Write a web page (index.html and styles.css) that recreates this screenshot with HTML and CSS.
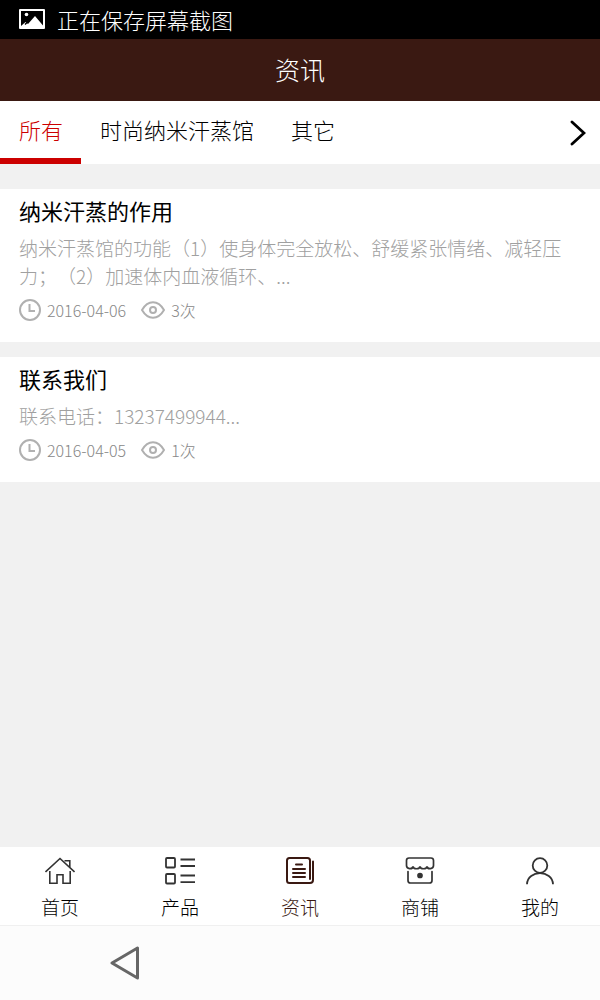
FILE: index.html
```html
<!DOCTYPE html>
<html lang="zh-CN">
<head>
<meta charset="utf-8">
<meta name="viewport" content="width=device-width, initial-scale=1">
<title>资讯</title>
<link rel="stylesheet" href="styles.css">
</head>
<body>
<div class="app">
  <div class="status">
    <svg class="status-icon" width="26" height="20" viewBox="0 0 26 20" aria-hidden="true">
      <rect width="26" height="20" rx="1" fill="#fff"/>
      <path d="M2 2h22v14.500L16 7l-7 8-2.500-2L2 17z" fill="#000"/>
      <circle cx="7.500" cy="5.500" r="1.800" fill="#fff"/>
      <path d="M6 15.500 9.500 12" stroke="#000" stroke-width="1.500"/>
    </svg>
    <span>正在保存屏幕截图</span>
  </div>
  <header class="header"><h1 class="header-title">资讯</h1></header>
  <nav class="tabs" aria-label="分类">
    <a class="tab tab-active" href="#all">所有</a>
    <a class="tab" href="#sauna">时尚纳米汗蒸馆</a>
    <a class="tab" href="#other">其它</a>
    <button class="tabs-more" type="button" aria-label="更多">
      <svg width="16" height="26" viewBox="0 0 16 26" fill="none" stroke="#000" stroke-width="2.800" stroke-linecap="round"><path d="M2 2 14 13 2 24"/></svg>
    </button>
  </nav>
  <main class="list">
    <article class="card">
      <h2 class="card-title">纳米汗蒸的作用</h2>
      <p class="card-text">纳米汗蒸馆的功能（1）使身体完全放松、舒缓紧张情绪、减轻压力；（2）加速体内血液循环、...</p>
      <div class="meta">
        <svg class="meta-clock" width="22" height="22" viewBox="0 0 22 22" fill="none" stroke="#b0b0b0" stroke-width="2" aria-hidden="true"><circle cx="11" cy="11" r="10"/><path d="M10.500 5v7H16"/></svg>
        <time datetime="2016-04-06">2016-04-06</time>
        <svg class="meta-eye" width="24" height="18" viewBox="0 0 24 18" fill="none" stroke="#b0b0b0" stroke-width="2" aria-hidden="true"><path d="M1 9C7-1.300 17-1.300 23 9 17 19.300 7 19.300 1 9z"/><circle cx="12" cy="9" r="3"/></svg>
        <span>3次</span>
      </div>
    </article>
    <article class="card">
      <h2 class="card-title">联系我们</h2>
      <p class="card-text">联系电话：13237499944...</p>
      <div class="meta">
        <svg class="meta-clock" width="22" height="22" viewBox="0 0 22 22" fill="none" stroke="#b0b0b0" stroke-width="2" aria-hidden="true"><circle cx="11" cy="11" r="10"/><path d="M10.500 5v7H16"/></svg>
        <time datetime="2016-04-05">2016-04-05</time>
        <svg class="meta-eye" width="24" height="18" viewBox="0 0 24 18" fill="none" stroke="#b0b0b0" stroke-width="2" aria-hidden="true"><path d="M1 9C7-1.300 17-1.300 23 9 17 19.300 7 19.300 1 9z"/><circle cx="12" cy="9" r="3"/></svg>
        <span>1次</span>
      </div>
    </article>
  </main>
  <nav class="bottom" aria-label="主导航">
    <a class="item" href="#home">
      <svg width="30" height="28" viewBox="0 0 30 28" fill="none" stroke="#333" stroke-width="1.600" aria-hidden="true"><path d="M.5 15 15 1.500 29.500 15"/><path d="M4.800 14v12.300h7.200v-8.500h6v8.500h7.200V14M19.500 3.800h5.300v6.500"/></svg>
      <span>首页</span>
    </a>
    <a class="item" href="#products">
      <svg width="30" height="28" viewBox="0 0 30 28" fill="none" stroke="#333" stroke-width="1.800" aria-hidden="true"><rect x="1" y="1" width="9" height="9.500" rx="1"/><rect x="1" y="17" width="9" height="9.500" rx="1"/><path d="M15.500 2.500h14.500M15.500 9h14.500M15.500 18.500h14.500M15.500 25.200h14.500"/></svg>
      <span>产品</span>
    </a>
    <a class="item item-active" href="#news" aria-current="page">
      <svg width="30" height="28" viewBox="0 0 30 28" fill="none" stroke="#3a1912" stroke-width="2" stroke-linecap="round" aria-hidden="true"><path d="M25 22V3.500Q25 1 22.500 1h-18Q2 1 2 3.500v20Q2 26 4.500 26H25q3 0 3-3V4.500"/><path d="M11 7.500h6M8 12h12M8 16h12M8 20h12"/></svg>
      <span>资讯</span>
    </a>
    <a class="item" href="#shop">
      <svg width="30" height="28" viewBox="0 0 30 28" fill="none" stroke="#333" stroke-width="1.700" stroke-linecap="round" aria-hidden="true"><path d="M4 1h22q2.500 0 2.500 2.500V8.500C28.500 12.500 22.500 12.500 22 9.500 21.500 12.500 15.500 12.500 15 9.500 14.500 12.500 8.500 12.500 8 9.500 7.500 12.500 1.500 12.500 1.500 8.500v-5Q1.500 1 4 1z"/><path d="M3 14.500V23.500Q3 26 5.500 26h19Q27 26 27 23.500v-9"/><circle cx="15" cy="18.500" r="2" fill="#333"/></svg>
      <span>商铺</span>
    </a>
    <a class="item" href="#me">
      <svg width="30" height="28" viewBox="0 0 30 28" fill="none" stroke="#333" stroke-width="1.800" aria-hidden="true"><circle cx="15" cy="8.500" r="7.300"/><path d="M2 27.200C2.500 12.500 27.500 12.500 28 27.200"/></svg>
      <span>我的</span>
    </a>
  </nav>
  <div class="system">
    <button class="back" type="button" aria-label="返回">
      <svg width="30" height="34" viewBox="0 0 30 34" fill="none" stroke="#666" stroke-width="3" stroke-linejoin="round"><path d="M27.500 2v30L2 17z"/></svg>
    </button>
  </div>
</div>
</body>
</html>
```
FILE: styles.css
```css
* {
  box-sizing: border-box;
}

body {
  margin: 0;
  background: #f1f1f1;
  color: #000;
  font-family: "Noto Sans CJK SC", sans-serif;
  font-weight: 300;
  text-spacing-trim: space-all;
}

a {
  color: inherit;
  text-decoration: none;
}

button {
  padding: 0;
  border: 0;
  background: none;
  cursor: pointer;
}

svg {
  display: block;
  flex: none;
}

.app {
  display: flex;
  flex-direction: column;
  min-height: 100vh;
}

.status {
  display: flex;
  align-items: center;
  gap: 12px;
  padding: 0 19px 1px;
  background: #000;
  color: #fff;
  font-size: 22px;
  line-height: 38px;
}

.header {
  padding-bottom: 2px;
  background: #3a1912;
  color: #fff;
  text-align: center;
}

.header-title {
  margin: 0;
  font-size: 25px;
  font-weight: 300;
  line-height: 60px;
}

.tabs {
  display: flex;
  background: #fff;
  font-size: 22px;
  line-height: 57px;
}

.tab {
  padding: 0 18px 0 19px;
  border-bottom: 6px solid transparent;
}

.tab-active {
  border-bottom-color: #c00;
  color: #c00;
}

.tabs-more {
  display: flex;
  align-items: center;
  margin-left: auto;
  padding-right: 14px;
}

.list {
  display: flex;
  flex: 1;
  flex-direction: column;
  gap: 15px;
  padding-top: 25px;
}

.card {
  padding: 3px 19px 20px;
  background: #fff;
}

.card-title {
  margin: 0 0 6px;
  font-size: 22px;
  font-weight: 400;
  line-height: 36px;
}

.card-text {
  margin: 0;
  color: #a0a0a0;
  font-size: 19px;
  line-height: 28px;
}

.meta {
  display: flex;
  align-items: center;
  margin-top: 8px;
  color: #888;
  font-size: 16px;
  line-height: 24px;
}

.meta-clock {
  margin-right: 6px;
}

.meta-eye {
  margin: 0 6px 0 15px;
}

.bottom {
  display: grid;
  grid-template-columns: repeat(5, 1fr);
  background: #fff;
  border-bottom: 1px solid #f0f0f0;
}

.item {
  display: flex;
  flex-direction: column;
  align-items: center;
  gap: 8px;
  padding: 10px 0 4px;
  font-size: 19px;
  line-height: 28px;
}

.item-active {
  color: #3a1912;
}

.system {
  display: flex;
  padding: 20px 110px;
  background: #fcfcfc;
}
```
